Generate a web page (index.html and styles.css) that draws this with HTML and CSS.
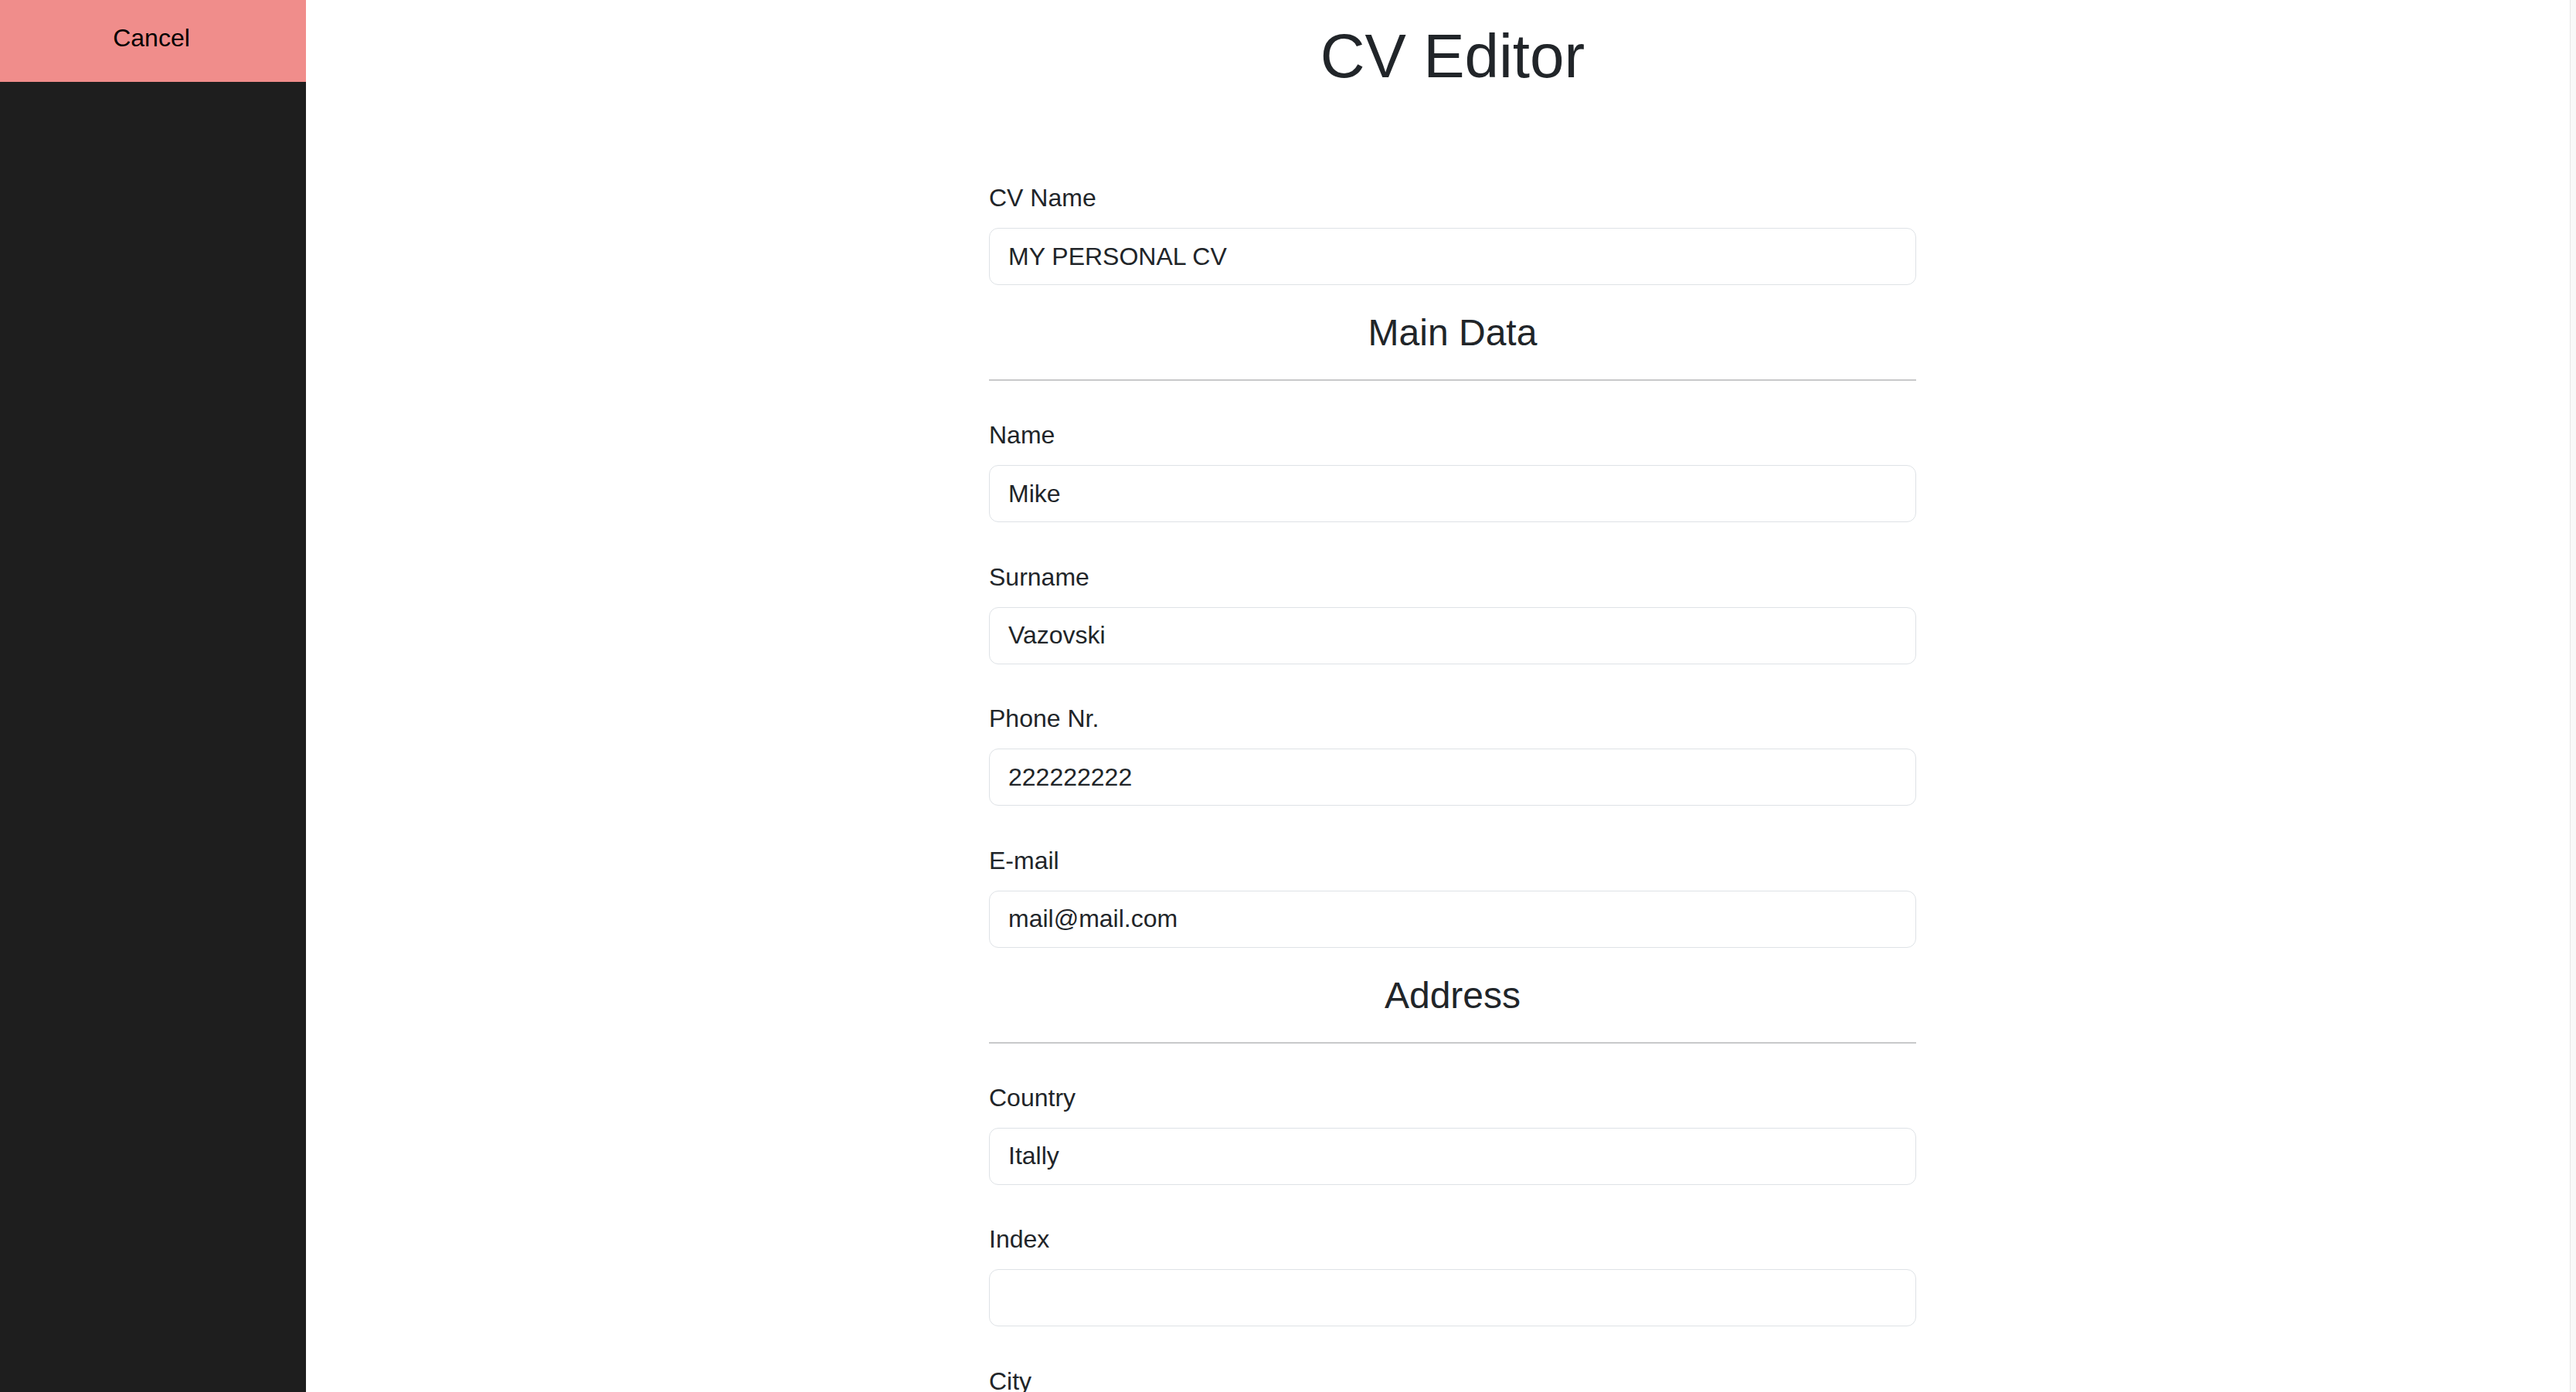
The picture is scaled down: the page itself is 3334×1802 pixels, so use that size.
FILE: index.html
```html
<!DOCTYPE html>
<html lang="en">
<head>
<meta charset="utf-8">
<title>CV Editor</title>
<link rel="stylesheet" href="styles.css">
</head>
<body>
<div class="app">
  <aside class="sidebar">
    <button class="cancel" type="button">Cancel</button>
  </aside>
  <main class="main">
    <div class="editor">
      <h1 class="title">CV Editor</h1>
      <form class="form">
        <div class="field">
          <label class="label" for="cvname">CV Name</label>
          <input class="input" id="cvname" type="text" value="MY PERSONAL CV">
        </div>
        <section class="group">
          <h2 class="group-title">Main Data</h2>
          <hr class="divider">
          <div class="fields">
            <div class="field">
              <label class="label" for="name">Name</label>
              <input class="input" id="name" type="text" value="Mike">
            </div>
            <div class="field">
              <label class="label" for="surname">Surname</label>
              <input class="input" id="surname" type="text" value="Vazovski">
            </div>
            <div class="field">
              <label class="label" for="phone">Phone Nr.</label>
              <input class="input" id="phone" type="text" value="222222222">
            </div>
            <div class="field">
              <label class="label" for="email">E-mail</label>
              <input class="input" id="email" type="text" value="mail@mail.com">
            </div>
          </div>
        </section>
        <section class="group">
          <h2 class="group-title">Address</h2>
          <hr class="divider">
          <div class="fields">
            <div class="field">
              <label class="label" for="country">Country</label>
              <input class="input" id="country" type="text" value="Itally">
            </div>
            <div class="field">
              <label class="label" for="index">Index</label>
              <input class="input" id="index" type="text" value="">
            </div>
            <div class="field">
              <label class="label" for="city">City</label>
              <input class="input" id="city" type="text" value="">
            </div>
          </div>
        </section>
      </form>
    </div>
  </main>
  <div class="scroll-edge"></div>
</div>
</body>
</html>
```
FILE: styles.css
```css
html, body {
  margin: 0;
  padding: 0;
  height: 100%;
  overflow: hidden;
  background: #ffffff;
  font-family: "Liberation Sans", Arial, sans-serif;
  color: #212529;
}

.app {
  display: flex;
  height: 100vh;
  overflow: hidden;
}

.sidebar {
  width: 396px;
  flex: 0 0 396px;
  background: #1e1e1e;
  display: flex;
  flex-direction: column;
}

.cancel {
  display: block;
  box-sizing: border-box;
  width: 100%;
  height: 106px;
  border: 0;
  margin: 0;
  padding: 0 4px 8px 0;
  background: #f08d8b;
  color: #000000;
  font-family: "Liberation Sans", Arial, sans-serif;
  font-size: 32px;
  line-height: 48px;
  text-align: center;
  cursor: pointer;
}

.main {
  flex: 1 1 auto;
  min-width: 0;
  padding-left: 38px;
}

.scroll-edge {
  flex: 0 0 7px;
  border-left: 1px solid #e6e6e6;
  background: #f8f8f8;
}

.editor {
  width: 1200px;
  margin: 0 auto;
  padding-top: 25px;
}

.title {
  margin: 0;
  font-size: 80px;
  line-height: 96px;
  font-weight: 400;
  text-align: center;
  color: #212529;
}

.form {
  margin-top: 111px;
  display: flex;
  flex-direction: column;
}

.field {
  display: flex;
  flex-direction: column;
}

.label {
  font-size: 32px;
  line-height: 48px;
  margin-bottom: 15px;
  color: #212529;
}

.input {
  box-sizing: border-box;
  width: 100%;
  height: 74px;
  margin: 0;
  padding: 12px 24px;
  border: 1px solid #dee2e6;
  border-radius: 12px;
  background: #ffffff;
  font-family: "Liberation Sans", Arial, sans-serif;
  font-size: 32px;
  line-height: 48px;
  color: #212529;
  outline: none;
}

.group-title {
  margin: 33px 0 31px;
  font-size: 48px;
  line-height: 58px;
  font-weight: 400;
  text-align: center;
  color: #212529;
}

.divider {
  margin: 0 0 46px;
  border: 0;
  border-top: 2px solid #c8c9ca;
  height: 0;
}

.fields {
  display: flex;
  flex-direction: column;
  gap: 46.5px;
}
```
